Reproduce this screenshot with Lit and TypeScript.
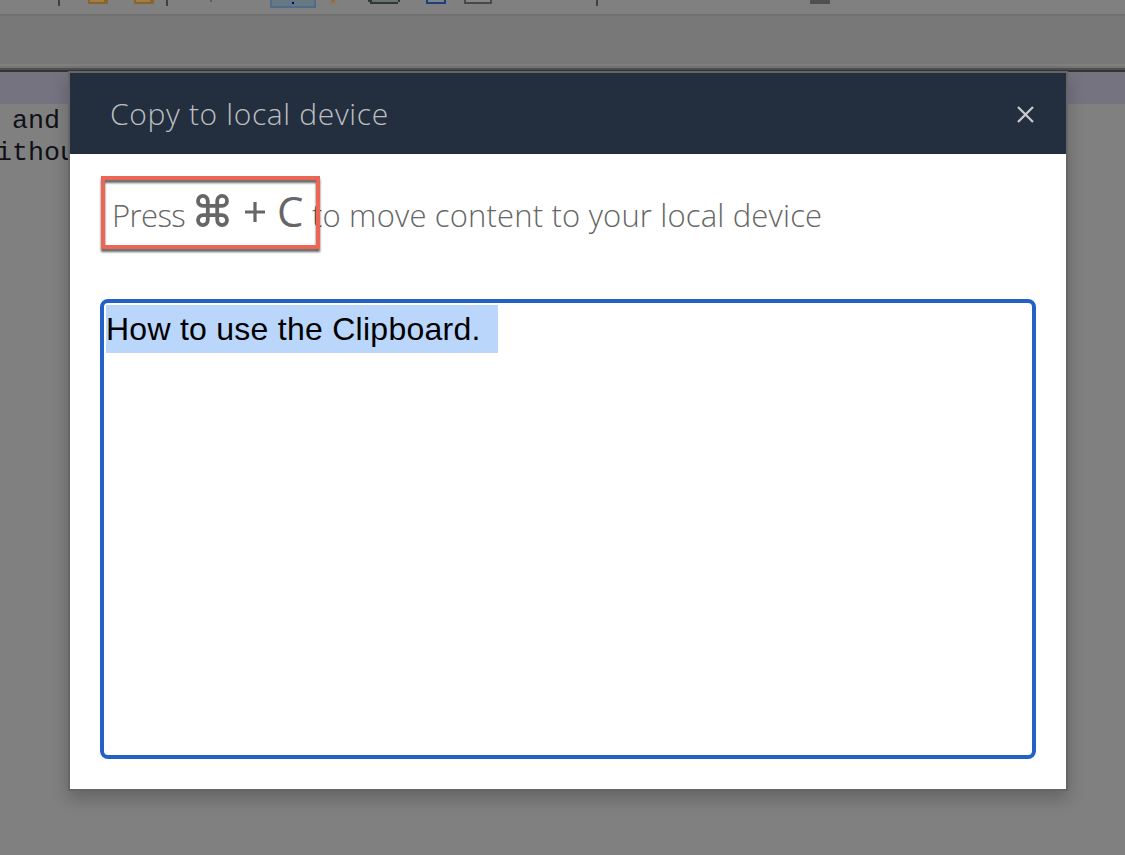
import { LitElement, html, css } from "lit";
import { customElement } from "lit/decorators.js";

@customElement("remote-desktop")
class RemoteDesktop extends LitElement {
  static styles = css`
    :host { display: flex; flex-direction: column; height: 100%; background: #808080; }
    .tools { display: block; flex: none; width: 100%; height: 14px; background: #808080; }
    .ribbon { box-sizing: border-box; flex: none; height: 58px; background: #787878;
      border-top: 2px solid #717171; display: flex; flex-direction: column; justify-content: flex-end; }
    .edge { height: 2px; flex: none; }
    .light { background: #808080; }
    .mid { background: #747474; }
    .dark { background: #505050; }
    .black { background: #343434; }
    .line { box-sizing: border-box; height: 32px; flex: none; padding-top: 1px;
      font: 26.7px/32px "Courier New", "Liberation Mono", monospace; color: #101018;
      white-space: pre; margin-left: -4px; }
    .current { background: #74737f; margin-left: 0; }
  `;
  render() {
    return html`
      <svg class="tools" viewBox="0 0 1125 14" shape-rendering="crispEdges">
        <path d="M58 0h2v6h-2zM166 0h2v6h-2zM596 0h2v6h-2z" fill="#404040" />
        <path d="M88 0h20v4H88zM134 0h20v4h-20z" fill="#8a632f" />
        <path d="M90 0h14v2H90zM136 0h14v2h-14z" fill="#9c8047" />
        <path d="M210 0h2v2h-2z" fill="#4c5f80" />
        <path d="M270 0h46v8h-46z" fill="#4f6c89" />
        <path d="M272 0h42v6h-42z" fill="#657883" />
        <path d="M292 2h2v2h-2z" fill="#000080" />
        <path d="M330 0h6v4h-6z" fill="#89796a" />
        <path d="M332 0h2v2h-2z" fill="#936322" />
        <path d="M368 0h32v2h-2v2h-28V2h-2z" fill="#333640" />
        <path d="M372 0h26v2h-26z" fill="#687666" />
        <path d="M426 0h20v4h-20z" fill="#203e79" />
        <path d="M428 0h16v2h-16z" fill="#7d858c" />
        <path d="M464 0h28v4h-28z" fill="#484848" />
        <path d="M466 0h24v2h-24z" fill="#858585" />
        <path d="M810 0h20v4h-20z" fill="#505050" />
      </svg>
      <div class="ribbon">
        <div class="edge light"></div><div class="edge mid"></div>
        <div class="edge dark"></div><div class="edge black"></div>
      </div>
      <div class="line current"></div>
      <div class="line"> and</div>
      <div class="line">ithou</div>
    `;
  }
}

@customElement("clipboard-dialog")
class ClipboardDialog extends LitElement {
  static styles = css`
    :host { box-sizing: border-box; display: flex; flex-direction: column; width: 1000px; height: 720px;
      border: 2px solid #666; background: #fff; box-shadow: 0 8px 16px rgba(0, 0, 0, 0.22);
      font-family: "Open Sans", sans-serif; font-weight: 300; }
    header { box-sizing: border-box; flex: none; height: 81px; padding: 0 31px 0 40px; background: #232f3e;
      color: #bdbfc1; display: flex; align-items: center; justify-content: space-between; }
    .title { font-size: 30px; line-height: 40px; letter-spacing: 0.65px; white-space: nowrap; }
    .close { display: block; width: 19px; height: 19px; margin-top: 1px; }
    .body { flex: 1; display: flex; flex-direction: column; padding: 22px 30px 30px; }
    .hint { flex: none; height: 123px; display: flex; align-items: flex-start; white-space: nowrap;
      color: #666; font-size: 31px; line-height: 75px; }
    .combo { box-sizing: border-box; position: relative; flex: none; width: 220px; height: 73px; padding-left: 12px;
      display: flex; }
    .combo::after { content: ""; position: absolute; z-index: 1; left: 1px; top: 0; right: 0; bottom: 0;
      border: 4px solid #ec6655; filter: drop-shadow(0 3px 1px rgba(0, 0, 0, 0.6)); }
    .press { flex: none; width: 84px; padding-top: 2px; letter-spacing: -0.6px; }
    .cmd { display: block; flex: none; width: 33px; height: 33px; margin-top: 18px; }
    .plus { display: block; flex: none; width: 20px; height: 20px; margin: 26px 12px 0 16px; }
    .key { font-size: 42px; font-weight: 400; line-height: 70px; }
    .rest { padding-top: 2px; margin-left: -8px; letter-spacing: 0.17px; }
    .field { box-sizing: border-box; flex: 1; border: 4px solid #2262c6; border-radius: 8px; padding: 2px; }
    .selected { display: inline-block; box-sizing: border-box; width: 392px; height: 48px; background: #bad6fb;
      color: #000; font: 400 32px/48px "Liberation Sans", Arial, sans-serif; letter-spacing: 0.26px; white-space: pre; }
  `;
  render() {
    return html`
      <header>
        <span class="title">Copy to local device</span>
        <svg class="close" viewBox="0 0 19 19" fill="none" stroke="#c8cacb" stroke-width="2.3">
          <path d="M2 2l15 15M17 2L2 17" />
        </svg>
      </header>
      <div class="body">
        <div class="hint">
          <div class="combo">
            <span class="press">Press</span>
            <svg class="cmd" viewBox="-0.5 -0.5 35 35" fill="none" stroke="#666" stroke-width="4">
              <path d="M12 12V6.8A5.2 5.2 0 1 0 6.8 12H27.2A5.2 5.2 0 1 0 22 6.8V27.2A5.2 5.2 0 1 0 27.2 22H6.8A5.2 5.2 0 1 0 12 27.2z" />
            </svg>
            <svg class="plus" viewBox="0 0 20 20" stroke="#666" stroke-width="3.2"><path d="M10 0v20M0 10h20" /></svg>
            <span class="key">C</span>
          </div>
          <span class="rest">to move content to your local device</span>
        </div>
        <div class="field"><span class="selected">How to use the Clipboard. </span></div>
      </div>
    `;
  }
}

@customElement("app-root")
class AppRoot extends LitElement {
  static styles = css`
    :host { display: block; position: relative; width: 1125px; height: 855px; overflow: hidden; }
    .dialog { position: absolute; left: 68px; top: 71px; }
  `;
  render() {
    return html`<remote-desktop></remote-desktop><clipboard-dialog class="dialog"></clipboard-dialog>`;
  }
}
